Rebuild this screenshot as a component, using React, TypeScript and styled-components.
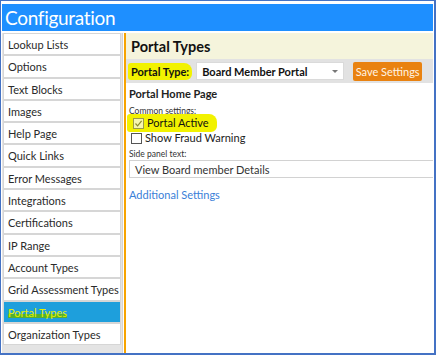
import React from "react";
import styled, { createGlobalStyle } from "styled-components";

const menuItems = [
  "Lookup Lists",
  "Options",
  "Text Blocks",
  "Images",
  "Help Page",
  "Quick Links",
  "Error Messages",
  "Integrations",
  "Certifications",
  "IP Range",
  "Account Types",
  "Grid Assessment Types",
  "Portal Types",
  "Organization Types",
];

const App: React.FC = () => {
  return (
    <>
      <GlobalStyle />
      <Frame>
        <TitleBar>Configuration</TitleBar>
        <Body>
          <Sidebar>
            {menuItems.map((item) => (
              <MenuItem key={item} $active={item === "Portal Types"}>
                {item === "Portal Types" ? <ActiveText>{item}</ActiveText> : item}
              </MenuItem>
            ))}
          </Sidebar>
          <Divider />
          <Main>
            <PageTitle>Portal Types</PageTitle>
            <Toolbar>
              <Marker>Portal Type:</Marker>
              <Select>
                Board Member Portal
                <Caret />
              </Select>
              <SaveButton>Save Settings</SaveButton>
            </Toolbar>
            <Section>
              <SectionTitle>Portal Home Page</SectionTitle>
              <SmallLabel $top={4}>Common settings:</SmallLabel>
              <CheckRow>
                <Marker $wide>
                  <Box $checked>
                    <svg width="9" height="9" viewBox="0 0 9 9">
                      <path d="M1.5 4.5 L3.6 6.8 L7.6 1.8" fill="none" stroke="#8a8a30" strokeWidth="1.2" />
                    </svg>
                  </Box>
                  Portal Active
                </Marker>
              </CheckRow>
              <CheckRow $top={1}>
                <Box />
                Show Fraud Warning
              </CheckRow>
              <SmallLabel $top={4}>Side panel text:</SmallLabel>
              <TextField>View Board member Details</TextField>
              <Link>Additional Settings</Link>
            </Section>
          </Main>
        </Body>
      </Frame>
    </>
  );
};

const GlobalStyle = createGlobalStyle`
  body {
    margin: 0;
    background: #fff;
  }
`;

const Frame = styled.div`
  width: 436px;
  height: 355px;
  box-sizing: border-box;
  border: 1px solid #4472c4;
  border-right-width: 2px;
  border-bottom-width: 2px;
  padding: 3px 1px 0 1px;
  display: flex;
  flex-direction: column;
  background: #fff;
  font-family: Lato, "Open Sans", sans-serif;
  color: #222;
  overflow: hidden;
`;

const TitleBar = styled.div`
  height: 27px;
  flex-shrink: 0;
  background: #1e8fff;
  color: #fff;
  font-size: 19px;
  letter-spacing: -0.3px;
  line-height: 28px;
  padding-left: 3px;
`;

const Body = styled.div`
  display: flex;
  flex: 1;
  min-height: 0;
  margin-top: 2px;
`;

const Sidebar = styled.nav`
  width: 118px;
  flex-shrink: 0;
  background: #e4e4e4;
  padding: 0 1px;
  border-right: 1px solid #d4d4d4;
`;

const MenuItem = styled.div<{ $active?: boolean }>`
  height: 20.3px;
  line-height: 21px;
  border: 1px solid #d6d6d6;
  background: ${(p) => (p.$active ? "#1e9fdc" : "#fff")};
  font-size: 11px;
  padding-left: 4px;
  color: #2a2a2a;
  white-space: nowrap;
  overflow: hidden;
`;

const ActiveText = styled.span`
  color: #e4f000;
  background: linear-gradient(transparent 60%, #54b030 60%, #54b030 90%, transparent 90%);
`;

const Divider = styled.div`
  width: 2px;
  margin-left: 1px;
  flex-shrink: 0;
  background: #f7a400;
`;

const Main = styled.main`
  flex: 1;
  min-width: 0;
  background: #fff;
`;

const PageTitle = styled.div`
  height: 26px;
  line-height: 28px;
  background: #f5f4dc;
  font-size: 14.5px;
  font-weight: 700;
  color: #111;
  padding-left: 5px;
`;

const Toolbar = styled.div`
  height: 24px;
  background: #e2e2e2;
  display: flex;
  align-items: center;
  padding-left: 2px;
  white-space: nowrap;
`;

const Marker = styled.span<{ $wide?: boolean }>`
  display: inline-flex;
  align-items: center;
  gap: 3px;
  flex-shrink: 0;
  white-space: nowrap;
  background: #f2f200;
  border-radius: 3px 8px 6px 3px;
  font-size: 11px;
  font-weight: ${(p) => (p.$wide ? 400 : 700)};
  color: #111;
  padding: ${(p) => (p.$wide ? "2px 8px 2px 6px" : "2px 3px")};
  margin: ${(p) => (p.$wide ? "-2px 0 -2px -4px" : "0")};
`;

const Select = styled.div`
  position: relative;
  flex-shrink: 0;
  box-sizing: border-box;
  width: 148px;
  height: 18px;
  line-height: 17px;
  margin-left: 4px;
  background: #fff;
  border: 1px solid #dadada;
  font-size: 11px;
  font-weight: 700;
  padding-left: 5px;
  color: #111;
`;

const Caret = styled.span`
  position: absolute;
  right: 5px;
  top: 7px;
  border-left: 3px solid transparent;
  border-right: 3px solid transparent;
  border-top: 3px solid #777;
`;

const SaveButton = styled.button`
  flex-shrink: 0;
  margin-left: 9px;
  box-sizing: border-box;
  width: 69px;
  height: 19px;
  padding: 0;
  border: none;
  border-radius: 2px;
  background: #e98210;
  color: #fff4e4;
  font-family: inherit;
  font-size: 11px;
  line-height: 19px;
  white-space: nowrap;
`;

const Section = styled.div`
  padding: 3px 0 0 3px;
  display: flex;
  flex-direction: column;
  align-items: flex-start;
`;

const SectionTitle = styled.div`
  font-size: 11px;
  font-weight: 700;
  line-height: 16px;
`;

const SmallLabel = styled.div<{ $top: number }>`
  font-size: 8.5px;
  line-height: 10px;
  margin-top: ${(p) => p.$top}px;
  color: #333;
`;

const CheckRow = styled.div<{ $top?: number }>`
  display: flex;
  align-items: center;
  gap: 3px;
  height: 14px;
  font-size: 11px;
  line-height: 14px;
  padding-left: 2px;
  margin-top: ${(p) => p.$top ?? 0}px;
`;

const Box = styled.span<{ $checked?: boolean }>`
  width: 9px;
  height: 9px;
  border: 1px solid ${(p) => (p.$checked ? "#9a9a50" : "#555")};
  background: ${(p) => (p.$checked ? "#f6f6b0" : "#fff")};
  display: inline-flex;
  align-items: center;
  justify-content: center;
`;

const TextField = styled.div`
  align-self: stretch;
  box-sizing: border-box;
  height: 18px;
  line-height: 17px;
  border: 1px solid #d2d2d2;
  border-right: none;
  font-size: 11px;
  padding-left: 5px;
  margin-top: 1px;
  color: #333;
`;

const Link = styled.a`
  font-size: 11px;
  line-height: 14px;
  color: #3a80d8;
  margin-top: 10px;
  cursor: pointer;
`;

export default App;
